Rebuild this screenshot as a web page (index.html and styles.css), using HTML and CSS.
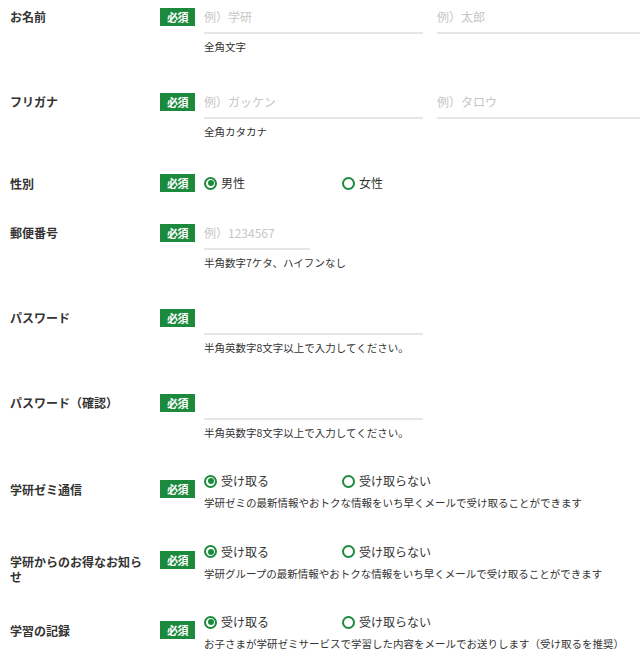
FILE: index.html
```html
<!DOCTYPE html>
<html lang="ja">
<head>
<meta charset="utf-8">
<title>会員登録</title>
<link rel="stylesheet" href="styles.css">
</head>
<body>
<form class="form">
  <div class="row row-input">
    <div class="label">お名前</div>
    <span class="badge">必須</span>
    <div class="field">
      <div class="inputs">
        <input class="text" type="text" placeholder="例）学研">
        <input class="text text-fill" type="text" placeholder="例）太郎">
      </div>
      <p class="note">全角文字</p>
    </div>
  </div>

  <div class="row row-input">
    <div class="label">フリガナ</div>
    <span class="badge">必須</span>
    <div class="field">
      <div class="inputs">
        <input class="text" type="text" placeholder="例）ガッケン">
        <input class="text text-fill" type="text" placeholder="例）タロウ">
      </div>
      <p class="note">全角カタカナ</p>
    </div>
  </div>

  <div class="row row-simple">
    <div class="label">性別</div>
    <span class="badge">必須</span>
    <div class="field">
      <div class="radios">
        <label class="radio"><span class="dot checked"></span>男性</label>
        <label class="radio"><span class="dot"></span>女性</label>
      </div>
    </div>
  </div>

  <div class="row row-input">
    <div class="label">郵便番号</div>
    <span class="badge">必須</span>
    <div class="field">
      <div class="inputs">
        <input class="text short" type="text" placeholder="例）1234567">
      </div>
      <p class="note">半角数字7ケタ、ハイフンなし</p>
    </div>
  </div>

  <div class="row row-input">
    <div class="label">パスワード</div>
    <span class="badge">必須</span>
    <div class="field">
      <div class="inputs">
        <input class="text" type="password">
      </div>
      <p class="note">半角英数字8文字以上で入力してください。</p>
    </div>
  </div>

  <div class="row row-input">
    <div class="label">パスワード（確認）</div>
    <span class="badge">必須</span>
    <div class="field">
      <div class="inputs">
        <input class="text" type="password">
      </div>
      <p class="note">半角英数字8文字以上で入力してください。</p>
    </div>
  </div>

  <div class="row row-choice">
    <div class="label">学研ゼミ通信</div>
    <span class="badge">必須</span>
    <div class="field">
      <div class="radios">
        <label class="radio"><span class="dot checked"></span>受け取る</label>
        <label class="radio"><span class="dot"></span>受け取らない</label>
      </div>
      <p class="note tight">学研ゼミの最新情報やおトクな情報をいち早くメールで受け取ることができます</p>
    </div>
  </div>

  <div class="row row-choice">
    <div class="label label-wrap">学研からのお得なお知らせ</div>
    <span class="badge">必須</span>
    <div class="field">
      <div class="radios">
        <label class="radio"><span class="dot checked"></span>受け取る</label>
        <label class="radio"><span class="dot"></span>受け取らない</label>
      </div>
      <p class="note tight">学研グループの最新情報やおトクな情報をいち早くメールで受け取ることができます</p>
    </div>
  </div>

  <div class="row row-choice">
    <div class="label">学習の記録</div>
    <span class="badge">必須</span>
    <div class="field">
      <div class="radios">
        <label class="radio"><span class="dot checked"></span>受け取る</label>
        <label class="radio"><span class="dot"></span>受け取らない</label>
      </div>
      <p class="note tight">お子さまが学研ゼミサービスで学習した内容をメールでお送りします（受け取るを推奨）</p>
    </div>
  </div>
</form>
</body>
</html>
```

FILE: styles.css
```css
html, body {
  margin: 0;
  padding: 0;
  background: #fff;
  overflow: hidden;
}

body {
  font-family: "Noto Sans CJK JP", "Noto Sans", sans-serif;
  color: #333;
  width: 640px;
  height: 672px;
}

.form {
  display: flex;
  flex-direction: column;
  padding-left: 10px;
}

.row {
  display: flex;
  margin-bottom: 30px;
}

.label {
  width: 150px;
  flex: none;
  font-size: 12px;
  font-weight: bold;
  color: #333;
  box-sizing: border-box;
  padding-right: 8px;
}

.badge {
  flex: none;
  width: 35px;
  height: 18px;
  line-height: 18px;
  margin-right: 9px;
  background: #1b8a3c;
  color: #fff;
  font-size: 11px;
  font-weight: bold;
  text-align: center;
  letter-spacing: -0.5px;
}

.field {
  flex: none;
  width: 436px;
}

/* text input rows */
.row-input {
  align-items: flex-start;
}

.row-input .label {
  line-height: 34px;
}

.row-input .badge {
  margin-top: 8px;
}

.inputs {
  display: flex;
  gap: 14px;
}

.text {
  flex: none;
  width: 219px;
  height: 34px;
  box-sizing: border-box;
  border: none;
  border-bottom: 2px solid #e6e6e6;
  padding: 0;
  margin: 0;
  outline: none;
  font-family: inherit;
  font-size: 12px;
  color: #333;
  background: transparent;
}

.text-fill {
  flex: 1;
  width: auto;
  min-width: 0;
}

.text.short {
  width: 106px;
}

.text::placeholder {
  color: #c6c6c6;
}

.note {
  margin: 5px 0 0;
  font-size: 10.5px;
  line-height: 16px;
  color: #333;
  white-space: nowrap;
}

.note.tight {
  margin-top: 4px;
}

/* radio rows */
.row-simple {
  align-items: center;
  height: 26px;
  margin-bottom: 20px;
}

.row-choice {
  align-items: center;
}

.row-choice .label,
.row-choice .badge {
  margin-bottom: 4px;
}

.radios {
  display: flex;
  height: 20px;
  align-items: center;
}

.radio {
  display: flex;
  align-items: center;
  width: 138px;
  font-size: 12px;
  color: #333;
  line-height: 20px;
}

.dot {
  flex: none;
  width: 13px;
  height: 13px;
  box-sizing: border-box;
  border: 2px solid #1b8a3c;
  border-radius: 50%;
  margin-right: 4px;
  display: flex;
  align-items: center;
  justify-content: center;
}

.dot.checked::after {
  content: "";
  width: 6px;
  height: 6px;
  border-radius: 50%;
  background: #1b8a3c;
}

.row-choice .label-wrap {
  align-self: flex-start;
  margin-top: 13px;
  margin-bottom: -2px;
  line-height: 15px;
}
```
